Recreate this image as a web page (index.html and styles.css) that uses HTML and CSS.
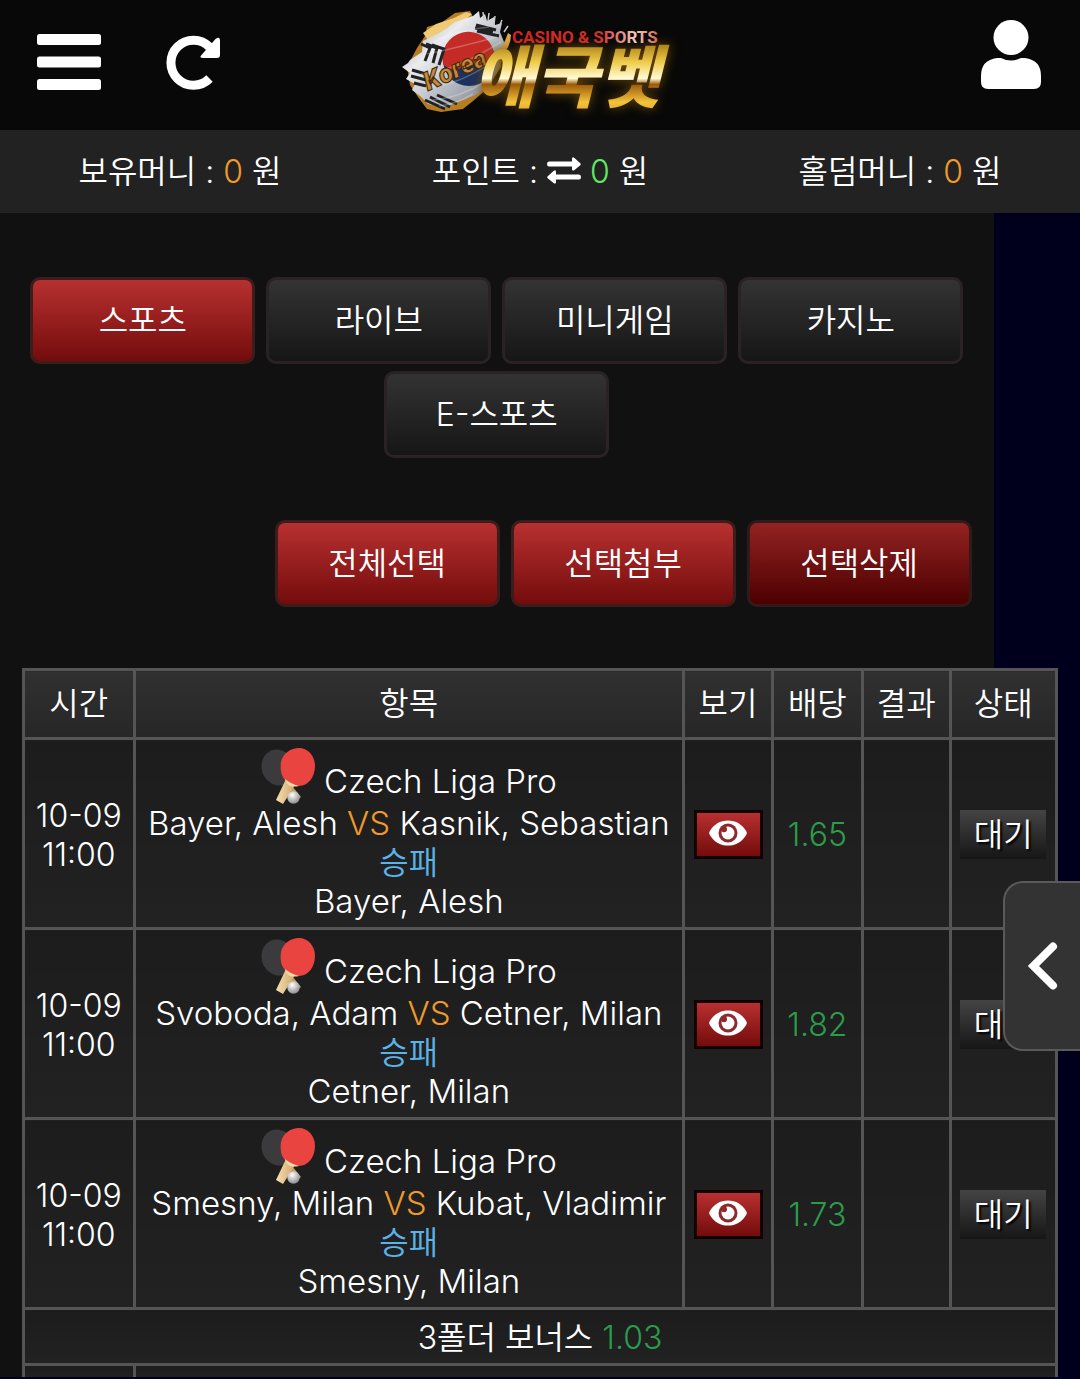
FILE: index.html
```html
<!DOCTYPE html>
<html lang="ko">
  <head>
    <meta charset="UTF-8" />
    <meta name="viewport" content="width=device-width, initial-scale=1.0" />
    <title>애국벳</title>
    <link rel="stylesheet" href="styles.css">
  </head>
  <body>
    <!-- shared icons -->
    <svg class="sprite" aria-hidden="true">
      <defs>
        <linearGradient id="wood" x1="0" y1="0" x2="1" y2="0">
          <stop offset="0" stop-color="#f6dfae" />
          <stop offset="1" stop-color="#cfa56a" />
        </linearGradient>
        <radialGradient id="ball" cx="0.4" cy="0.3" r="0.7">
          <stop offset="0" stop-color="#ffffff" />
          <stop offset="1" stop-color="#8e8e92" />
        </radialGradient>
      </defs>
      <symbol id="eye" viewBox="0 0 38 26">
        <path fill="#fff" d="M0.6 11.6C4.5 4.4 11.300 0.500 19 0.500s14.500 3.900 18.400 11.100a2.800 2.800 0 0 1 0 2.800C33.500 21.600 26.700 25.500 19 25.500S4.500 21.600 0.600 14.400a2.800 2.800 0 0 1 0-2.800z" />
        <circle cx="19" cy="13" r="9.500" fill="#8f2a2c" />
        <circle cx="19" cy="13" r="6.500" fill="#fff" />
        <circle cx="15" cy="9.300" r="3" fill="#8f2a2c" />
      </symbol>
      <symbol id="pingpong" viewBox="0 0 54 56">
        <path d="M27 33l13 16-4 3-13-16z" fill="#c79c63" />
        <path d="M1 14C3 5 11 0 19 2c9 2 14 10 12 19-1 7-4 12-8 16-4 1-9 1-13-2C3 31-1 23 1 14z" fill="#3b3b3d" />
        <path d="M25 31l9 6-12 19-7-4z" fill="url(#wood)" />
        <path d="M20 14C22 5 30 0 38 0c9 0 16 8 16 18 0 11-7 20-16 20-5 0-11-3-14-6-4-4-5-11-4-18z" fill="#e94440" />
        <path d="M24 31q6 5 14 7-5 1-9 0-4-2-5-7z" fill="#f3d9a6" />
        <circle cx="32.500" cy="49.500" r="6.200" fill="url(#ball)" />
      </symbol>
    </svg>

    <header class="topbar">
      <div class="topbar-left">
        <button type="button" class="icon-btn" aria-label="메뉴">
          <svg width="64" height="56" viewBox="0 0 64 56" fill="#fff">
            <rect x="0" y="0" width="64" height="11" rx="2.500" />
            <rect x="0" y="22.500" width="64" height="11" rx="2.500" />
            <rect x="0" y="45" width="64" height="11" rx="2.500" />
          </svg>
        </button>
        <button type="button" class="icon-btn" aria-label="새로고침">
          <svg width="56" height="56" viewBox="0 0 56 56">
            <path d="M44.500 44.500A22.500 22.500 0 1 1 44.500 13" fill="none" stroke="#fff" stroke-width="9" />
            <path d="M36.500 21L50.500 5q4.500-3 4.500 1.500V21q0 3-3 3H38.500q-5 0-2-3z" fill="#fff" />
          </svg>
        </button>
      </div>

      <a class="logo" href="#" aria-label="애국벳">
        <svg width="290" height="110" viewBox="-5 0 290 110">
          <defs>
            <linearGradient id="gold" x1="0" y1="0" x2="0" y2="1">
              <stop offset="0.200" stop-color="#a87a12" />
              <stop offset="0.400" stop-color="#f0cd4e" />
              <stop offset="0.560" stop-color="#fffbd8" />
              <stop offset="0.620" stop-color="#9c5a08" />
              <stop offset="0.800" stop-color="#f3c33c" />
              <stop offset="1" stop-color="#d98d16" />
            </linearGradient>
            <linearGradient id="ruby" x1="0" y1="0" x2="1" y2="0">
              <stop offset="0" stop-color="#d3221e" />
              <stop offset="0.600" stop-color="#cf2f2b" />
              <stop offset="0.850" stop-color="#f3c9c0" />
              <stop offset="1" stop-color="#d66a4c" />
            </linearGradient>
            <linearGradient id="flag" x1="0" y1="0" x2="1" y2="1">
              <stop offset="0" stop-color="#8d9299" />
              <stop offset="0.350" stop-color="#ececef" />
              <stop offset="0.600" stop-color="#b9bdc4" />
              <stop offset="1" stop-color="#70747b" />
            </linearGradient>
          </defs>
          <g transform="translate(3 -3)">
            <path d="M14 44l8-12 2-9 14-4 14-10 15-2 3 6 12 8 18 18-2 24-14 22-14 12-10 8-22 3-14-3-9-12-8-12-3-18z" fill="#b57c22" />
            <path d="M20 29l13-9 18-6 12-6 6 2-8 7-16 6-10 9-10 4z" fill="#f0cb77" />
            <path d="M7 56l12-8 1-11 18-9 14-10 18-6 6-5 1 7 5-4 2 7 7-4 1 8 7-2-2 9 4 10-4 20-8 20-14 12-20 8-14 6-16-4-8-8-8-6 3-6-9-5 4-6-8-6 6-4z" fill="url(#flag)" />
            <circle cx="66" cy="56" r="26" fill="#1c315f" />
            <path d="M40 60A26 26 0 0 1 91 48c2 12-9 15-19 13-12-3-18 13-32-1z" fill="#c42a26" />
            <path d="M23 40l11 4-4 15M18 40l9 4-5 13M29 41l12 4-5 16M9 66l14 4M8 72l15 4M11 79l12 3M22 96l20 9M27 93l20 10M34 91l20 9M73 21l20 5M74 27l22 5M72 24l18 4" fill="none" stroke="#202124" stroke-width="3" />
            <path d="M30 38q25-12 56-15M24 50q25-5 70-17M18 70q30-1 80-32M20 84q36-2 72-28M30 96q26-2 52-18M36 102q18-2 34-12" fill="none" stroke="#fff" stroke-opacity="0.250" stroke-width="1.500" />
            <path d="M88 53q12-8 17-24l3 2q0 15-16 26z" fill="#d9a648" />
            <path d="M80 8l1 8M86 9l-1 8M92 12l-1 8M99 16l-3 7M105 22l-4 6" stroke="#c9c9cd" stroke-width="1.500" />
          </g>
          <text x="28" y="84" class="logo-korea" transform="rotate(-24 28 84)">Korea</text>
          <text x="73" y="95" class="logo-name">애국벳</text>
          <text x="112" y="36" class="logo-tag" fill="url(#ruby)">CASINO &amp; SPORTS</text>
        </svg>
      </a>

      <button type="button" class="icon-btn icon-user" aria-label="내 정보">
        <svg width="62" height="70" viewBox="0 0 62 70" fill="#fff">
          <circle cx="31" cy="17.500" r="17.500" />
          <path d="M17 38h4q10 5 20 0h4q16 2 16 18v6q0 7-7 7H8q-7 0-7-7v-6q0-16 16-18z" />
        </svg>
      </button>
    </header>

    <div class="money">
      <div>보유머니 : <span class="orange">0</span> 원</div>
      <div>
        포인트 :
        <svg class="swap" width="34" height="27" viewBox="0 0 34 27" fill="#fff">
          <path d="M2 4.500h23V2q0-3 2.500-1l5.500 5q1.500 1 0 2.500L27.500 13Q25 14.500 25 12V9.500H2Q0 9.500 0 7t2-2.500z" />
          <path d="M32 17.500H9V15q0-3-2.500-1L1 19q-1.500 1 0 2.500l5.500 4.500Q9 27.500 9 25v-2.500h23q2 0 2-2.500t-2-2.500z" />
        </svg>
        <span class="green-light">0</span> 원
      </div>
      <div>홀덤머니 : <span class="orange">0</span> 원</div>
    </div>

    <main class="content">
      <nav class="tabs">
        <button type="button" class="btn red">스포츠</button>
        <button type="button" class="btn">라이브</button>
        <button type="button" class="btn">미니게임</button>
        <button type="button" class="btn">카지노</button>
        <button type="button" class="btn">E-스포츠</button>
      </nav>

      <div class="actions">
        <button type="button" class="btn red">전체선택</button>
        <button type="button" class="btn red">선택첨부</button>
        <button type="button" class="btn darkred">선택삭제</button>
      </div>

      <table class="bets">
        <colgroup>
          <col class="col-time">
          <col class="col-item">
          <col class="col-view">
          <col class="col-odds">
          <col class="col-result">
          <col class="col-state">
        </colgroup>
        <thead>
          <tr>
            <th>시간</th>
            <th>항목</th>
            <th>보기</th>
            <th>배당</th>
            <th>결과</th>
            <th>상태</th>
          </tr>
        </thead>
        <tbody>
          <tr>
            <td>10-09<br>11:00</td>
            <td class="match">
              <div><svg class="sport"><use href="#pingpong" /></svg> Czech Liga Pro</div>
              <div>Bayer, Alesh <span class="orange">VS</span> Kasnik, Sebastian</div>
              <div class="blue">승패</div>
              <div>Bayer, Alesh</div>
            </td>
            <td><button type="button" class="view" aria-label="보기"><svg><use href="#eye" /></svg></button></td>
            <td class="green">1.65</td>
            <td></td>
            <td><span class="state">대기</span></td>
          </tr>
          <tr>
            <td>10-09<br>11:00</td>
            <td class="match">
              <div><svg class="sport"><use href="#pingpong" /></svg> Czech Liga Pro</div>
              <div>Svoboda, Adam <span class="orange">VS</span> Cetner, Milan</div>
              <div class="blue">승패</div>
              <div>Cetner, Milan</div>
            </td>
            <td><button type="button" class="view" aria-label="보기"><svg><use href="#eye" /></svg></button></td>
            <td class="green">1.82</td>
            <td></td>
            <td><span class="state">대기</span></td>
          </tr>
          <tr>
            <td>10-09<br>11:00</td>
            <td class="match">
              <div><svg class="sport"><use href="#pingpong" /></svg> Czech Liga Pro</div>
              <div>Smesny, Milan <span class="orange">VS</span> Kubat, Vladimir</div>
              <div class="blue">승패</div>
              <div>Smesny, Milan</div>
            </td>
            <td><button type="button" class="view" aria-label="보기"><svg><use href="#eye" /></svg></button></td>
            <td class="green">1.73</td>
            <td></td>
            <td><span class="state">대기</span></td>
          </tr>
          <tr>
            <td colspan="6">3폴더 보너스 <span class="green">1.03</span></td>
          </tr>
          <tr class="next">
            <td></td>
            <td colspan="5"></td>
          </tr>
        </tbody>
      </table>
    </main>

    <button type="button" class="drawer" aria-label="열기">
      <svg width="30" height="48" viewBox="0 0 30 48">
        <path d="M25 4.500L5.500 24L25 43.500" fill="none" stroke="#fff" stroke-width="8" stroke-linecap="round" />
      </svg>
    </button>
  </body>
</html>
```
FILE: styles.css
```css
* {
  box-sizing: border-box;
}
body {
  margin: 0;
  background: #00001c;
  color: #fff;
  font-family: Inter, "Noto Sans CJK KR", sans-serif;
  font-size: 32px;
  font-weight: 350;
  line-height: 39px;
  overflow-x: hidden;
}
button {
  font: inherit;
  color: inherit;
  cursor: pointer;
}
.sprite {
  position: absolute;
  width: 0;
  height: 0;
}

/* header */
.topbar {
  display: grid;
  grid-template-columns: 1fr auto 1fr;
  align-items: center;
  height: 130px;
  padding: 0 38px 6px 37px;
  background: #080808;
}
.topbar-left {
  display: flex;
  gap: 64px;
}
.icon-btn {
  padding: 0;
  border: 0;
  background: none;
}
.icon-btn svg,
.logo svg {
  display: block;
}
.logo svg {
  overflow: visible;
}
.icon-user {
  justify-self: end;
  padding-bottom: 14px;
}
.logo-name {
  font-family: "Noto Sans CJK KR", sans-serif;
  font-size: 68px;
  font-weight: 900;
  font-style: italic;
  fill: url(#gold);
  filter: drop-shadow(0 0 6px #6b4a08);
}
.logo-tag {
  font-family: Roboto, sans-serif;
  font-size: 17px;
  font-weight: 700;
}
.logo-korea {
  font-family: Roboto, sans-serif;
  font-size: 26px;
  font-weight: 900;
  font-style: italic;
  fill: #c38a3a;
  stroke: #3d2405;
  stroke-width: 1px;
}

.money {
  display: grid;
  grid-template-columns: repeat(3, 1fr);
  padding: 22px 0;
  background: #222;
  text-align: center;
}
.swap {
  vertical-align: -1px;
}
.orange {
  color: #f09a2a;
}
.green-light {
  color: #62e862;
}
.green {
  color: #2a9d4b;
}
.blue {
  color: #5cb3e8;
}

/* content */
.content {
  width: 92%;
  padding: 64px 22px 0;
  background: #111;
}
.tabs {
  display: flex;
  flex-wrap: wrap;
  justify-content: center;
  gap: 7px 11px;
}
.actions {
  display: flex;
  justify-content: flex-end;
  gap: 11px;
  margin: 62px 0 61px;
}
.btn {
  width: 225px;
  height: 87px;
  padding: 0;
  border: 3px solid #2b2323;
  border-radius: 10px;
  background: linear-gradient(#333, #161616);
}
.btn.red {
  border-color: #3d1c1c;
  background: linear-gradient(#b83030, #740c0c);
}
.btn.darkred {
  border-color: #331a1a;
  background: linear-gradient(#942222, #4c0000);
}

/* table */
.bets {
  width: 109.1%;
  table-layout: fixed;
  border-collapse: collapse;
  text-align: center;
}
.col-time { width: 10.7%; }
.col-item { width: 53.2%; }
.col-view { width: 8.6%; }
.col-odds { width: 8.7%; }
.col-result { width: 8.5%; }
.col-state { width: 10.3%; }
.bets th,
.bets td {
  padding: 8px 0 6px;
  border: 3px solid #555;
  background: linear-gradient(#1c1c1c, #222);
}
.bets th {
  padding: 13px 0 14px;
  background: linear-gradient(#303030, #272727);
  font-weight: inherit;
}
.match {
  font-size: 33px;
}
.match .blue {
  font-size: 32px;
}
.sport {
  width: 54px;
  height: 56px;
  vertical-align: -11px;
}
.view {
  display: inline-block;
  width: 69px;
  height: 49px;
  padding: 0;
  border: 3px solid #140000;
  background: linear-gradient(#b83030, #740c0c);
  vertical-align: middle;
}
.view svg {
  display: block;
  width: 38px;
  height: 26px;
  margin: 0 auto 4px;
}
.state {
  display: inline-block;
  width: 86px;
  padding: 5px 0;
  background: linear-gradient(#444, #161616);
  text-shadow: 2px 2px 2px #000;
  vertical-align: middle;
}
.bets .next td {
  height: 12px;
  padding: 0;
  border-bottom: 0;
}

/* slide-out handle on the right edge */
.drawer {
  position: fixed;
  top: 881px;
  right: 0;
  width: 77px;
  height: 170px;
  padding: 0;
  border: 2px solid #5a5a5a;
  border-right: 0;
  border-radius: 20px 0 0 20px;
  background: #333;
}
.drawer svg {
  display: block;
  margin: 0 auto;
}
```
